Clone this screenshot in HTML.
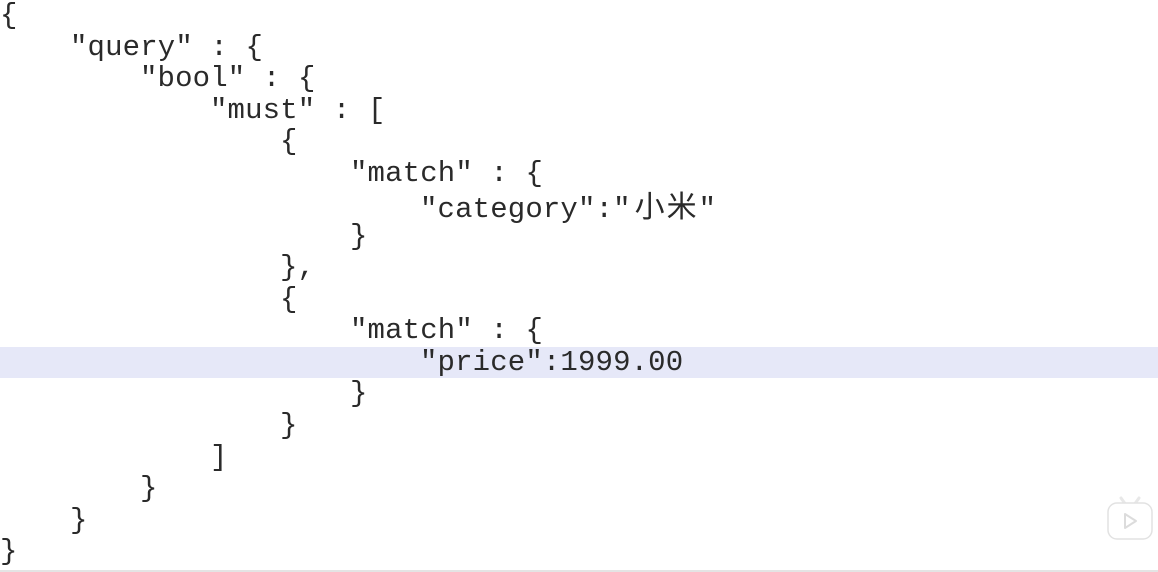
<!DOCTYPE html>
<html><head><meta charset="utf-8"><style>
body{margin:0;width:1158px;height:572px;background:#fff;overflow:hidden;position:relative}
.l{position:absolute;height:31px;line-height:31px;font-family:"Liberation Mono","Noto Sans CJK SC",monospace;font-size:29px;letter-spacing:0.15px;color:#2a2a2a;white-space:pre}
.hl{position:absolute;left:0;top:347px;width:1158px;height:31px;background:#e6e8f8}
.bot{position:absolute;left:0;top:570px;width:1158px;height:2px;background:#e4e4e4}
.cjk{font-family:"Noto Sans CJK SC",sans-serif;font-size:30px;letter-spacing:2px;margin-left:4px}
</style></head><body>
<div class="hl"></div>
<div class="l" style="left:0;top:0">{</div>
<div class="l" style="left:70px;top:32px">"query" : {</div>
<div class="l" style="left:140px;top:63px">"bool" : {</div>
<div class="l" style="left:210px;top:95px">"must" : [</div>
<div class="l" style="left:280px;top:126px">{</div>
<div class="l" style="left:350px;top:158px">"match" : {</div>
<div class="l" style="left:420px;top:189px">"category":"<span class="cjk">小米</span>"</div>
<div class="l" style="left:350px;top:221px">}</div>
<div class="l" style="left:280px;top:252px">},</div>
<div class="l" style="left:280px;top:284px">{</div>
<div class="l" style="left:350px;top:315px">"match" : {</div>
<div class="l" style="left:420px;top:347px">"price":1999.00</div>
<div class="l" style="left:350px;top:378px">}</div>
<div class="l" style="left:280px;top:410px">}</div>
<div class="l" style="left:210px;top:442px">]</div>
<div class="l" style="left:140px;top:473px">}</div>
<div class="l" style="left:70px;top:505px">}</div>
<div class="l" style="left:0;top:536px">}</div>
<svg style="position:absolute;left:1104px;top:492px" width="52" height="52" viewBox="0 0 52 52">
<path d="M17 6 L22 13 M35 6 L30 13" stroke="#e8e8e8" stroke-width="3" stroke-linecap="round"/>
<rect x="4" y="11" width="44" height="36" rx="9" fill="#ffffff" stroke="#e2e2e2" stroke-width="1.5"/>
<path d="M21 22 L32 29 L21 36 Z" fill="none" stroke="#dcdcdc" stroke-width="2" stroke-linejoin="round"/>
</svg>
<div class="bot"></div>
</body></html>
